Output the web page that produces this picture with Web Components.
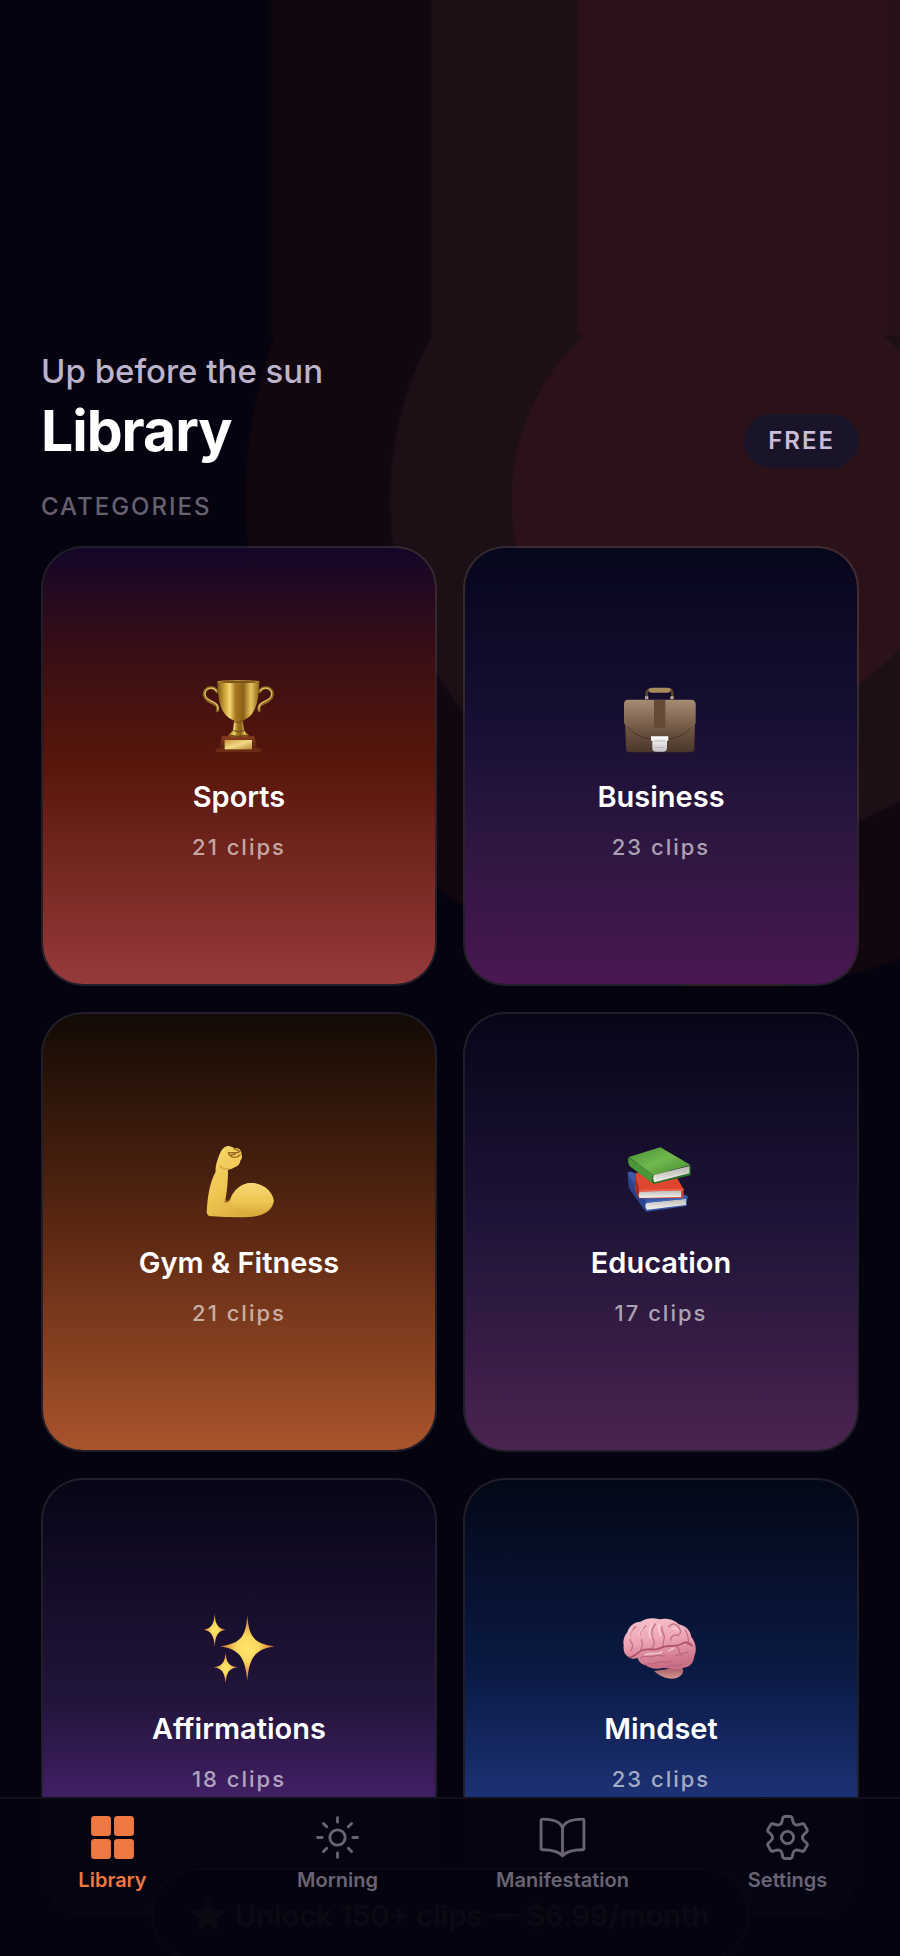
<!DOCTYPE html>
<html lang="en">
<head>
<meta charset="utf-8">
<meta name="viewport" content="width=device-width, initial-scale=1">
<title>Library</title>
<style>
  body {
    margin: 0;
    background: #05030f;
    font-family: Inter, "Liberation Sans", sans-serif;
  }
</style>
</head>
<body>
<library-app>
  <library-header greeting="Up before the sun" plan="FREE">Library</library-header>
  <category-grid label="Categories">
    <category-card icon="trophy" clips="21" colors="#140628, #3a0e14 25%, #58170b 50%, #963a3b">Sports</category-card>
    <category-card icon="briefcase" clips="23" colors="#06061c, #170f32 40%, #2f1742 70%, #4a1752">Business</category-card>
    <category-card icon="arm" clips="21" colors="#130a05, #5c2812 50%, #a9542d">Gym &amp; Fitness</category-card>
    <category-card icon="books" clips="17" colors="#080518, #1d1336 45%, #4a2450">Education</category-card>
    <category-card icon="sparkles" clips="18" colors="#080516, #21143a 50%, #3d1e5f 70%, #5e2c86">Affirmations</category-card>
    <category-card icon="brain" clips="23" colors="#030816, #0b1a45 45%, #1b2f70 70%, #2a48a0">Mindset</category-card>
  </category-grid>
  <upgrade-button slot="floating">Unlock 150+ clips — $6.99/month</upgrade-button>
  <tab-bar slot="tabs">
    <tab-item icon="grid" active>Library</tab-item>
    <tab-item icon="sun">Morning</tab-item>
    <tab-item icon="book">Manifestation</tab-item>
    <tab-item icon="gear">Settings</tab-item>
  </tab-bar>
</library-app>

<script>
const emojis = {
  trophy: `
    <svg viewBox="-3 12 360 330" aria-hidden="true">
      <defs>
        <linearGradient id="cup"><stop stop-color="#7d5a17"/><stop offset=".18" stop-color="#cfa53a"/><stop offset=".3" stop-color="#f0d778"/><stop offset=".43" stop-color="#a87920"/><stop offset=".62" stop-color="#8c6119"/><stop offset=".8" stop-color="#e5c45c"/><stop offset="1" stop-color="#8a6418"/></linearGradient>
        <linearGradient id="plate" x2="1" y2="1"><stop stop-color="#c9973c"/><stop offset=".5" stop-color="#f3da86"/><stop offset="1" stop-color="#b98633"/></linearGradient>
        <linearGradient id="wood" x2="0" y2="1"><stop stop-color="#8b3e20"/><stop offset="1" stop-color="#55200f"/></linearGradient>
      </defs>
      <g fill="none" stroke-linecap="round">
        <path d="M111 92c-6-16-30-16-37 0-5 14 5 26 20 32 14 6 23 11 18 25M239 92c6-16 30-16 37 0 5 14-5 26-20 32-14 6-23 11-18 25" stroke="#8c6820" stroke-width="9"/>
        <path d="M109 90c-7-12-27-12-33 3-4 12 6 22 20 28 14 6 20 12 17 24M241 90c7-12 27-12 33 3 4 12-6 22-20 28-14 6-20 12-17 24" stroke="#dcc067" stroke-width="4"/>
      </g>
      <path d="M126 226h97l8 36H118z" fill="url(#wood)"/>
      <path d="M110 262h130l4 12H106z" fill="#6b2b15"/>
      <path d="M134 237h82v28h-82z" fill="url(#plate)"/>
      <path d="M144 226c0-8 13-10 15-20l4-28h25l4 28c2 10 15 12 15 20z" fill="url(#cup)"/>
      <path d="M112 61h126c-1 42-6 83-27 103-9 9-21 15-36 15s-27-6-36-15c-21-20-26-61-27-103z" fill="url(#cup)"/>
      <ellipse cx="175" cy="62" rx="63" ry="5" fill="#b68b36"/>
      <ellipse cx="175" cy="63" rx="55" ry="3" fill="#765019"/>
      <path d="M157 181q18 7 36 0M154 208q21 8 42 0M146 222q29 8 58 0" fill="none" stroke="#6b4812" stroke-width="3"/>
    </svg>`,
  briefcase: `
    <svg viewBox="3 12 360 330" aria-hidden="true">
      <defs>
        <linearGradient id="case" x2="0" y2="1"><stop stop-color="#8e7560"/><stop offset=".5" stop-color="#705743"/><stop offset="1" stop-color="#49362b"/></linearGradient>
        <linearGradient id="flap" x2="0" y2="1"><stop stop-color="#a68c74"/><stop offset=".35" stop-color="#8d735d"/><stop offset="1" stop-color="#5c4536"/></linearGradient>
        <linearGradient id="clasp" x2="0" y2="1"><stop stop-color="#fff"/><stop offset="1" stop-color="#c5c1c6"/></linearGradient>
      </defs>
      <path d="M140 112V96q1-10 12-10h56q9 0 9 10v16" fill="none" stroke="#57452f" stroke-width="8"/>
      <path d="M145 87q2-7 12-7h46q9 0 10 7-3 8-9 8h-50q-7 0-9-8z" fill="#a8895c"/>
      <path d="M135 106h10v9h-10zM211 106h10v9h-10z" fill="#b9a88e"/>
      <path d="M74 128h212l-3 136q-1 10-12 10H90q-12 0-12-10z" fill="url(#case)"/>
      <path d="M84 116h190q13 0 13 14v56c-8 20-38 45-82 50h-52c-43-5-72-30-81-50v-56q0-14 12-14z" fill="url(#flap)"/>
      <path d="M84 198c15 20 39 34 74 37M202 235c32-3 57-17 72-36" fill="none" stroke="#4b3528" stroke-width="3"/>
      <path d="M162 117h34v84h-34z" fill="#654a38"/>
      <path d="M153 226h52v13h-4v21q0 12-12 12h-21q-11 0-11-12v-21h-4z" fill="url(#clasp)"/>
      <path d="M162 240h34M165 259h28" stroke="#b9b5bb" stroke-width="3"/>
    </svg>`,
  arm: `
    <svg viewBox="-3 0 360 330" aria-hidden="true">
      <defs>
        <linearGradient id="skin" x2=".7" y2="1"><stop stop-color="#f8d86e"/><stop offset=".55" stop-color="#edc450"/><stop offset="1" stop-color="#d8a63a"/></linearGradient>
        <linearGradient id="muscle" x2="0" y2="1"><stop stop-color="#f6d974"/><stop offset=".6" stop-color="#edc550"/><stop offset="1" stop-color="#d8a63a"/></linearGradient>
      </defs>
      <path d="M118 71q8-22 24-26c9-1 14 3 20 6 10-1 17 2 20 8q4 6 2 10c4 8 2 15-3 20 0 9-7 16-17 20-7 5-15 7-20 7 0 30-2 60-8 92 6 6 13 2 17-6 13-26 36-47 61-46 32 2 64 24 67 53-1 28-30 45-65 48-40 4-80 1-120-1-14 0-18-8-15-26 2-34 9-78 26-108-2-15 4-33 11-51z" fill="url(#skin)"/>
      <path d="M150 206c8-25 31-50 64-50 38 0 65 28 67 53-2 20-24 38-59 43-35 3-62-10-72-46z" fill="url(#muscle)"/>
      <path d="M134 212q8 3 16-7M145 65l31 0M145 64q2 13 18 15 12-1 17-7M153 72l13-3M162 53l18 9" fill="none" stroke="#98651f" stroke-width="4" stroke-linecap="round"/>
      <path d="M119 105q10 12 30 8" fill="none" stroke="#d9a840" stroke-width="4"/>
    </svg>`,
  books: `
    <svg viewBox="3 0 360 330" aria-hidden="true">
      <defs>
        <linearGradient id="green" x2="1" y2="1"><stop stop-color="#4a8e37"/><stop offset=".5" stop-color="#70b84d"/><stop offset="1" stop-color="#438833"/></linearGradient>
        <linearGradient id="page" x2="0" y2="1"><stop stop-color="#b9b9b7"/><stop offset="1" stop-color="#f5f3ee"/></linearGradient>
      </defs>
      <path d="M83 129q0-9 12-7l121 53 47 20-3 30-121 17-50-70z" fill="#3958a7"/>
      <path d="M83 129l56 85-2 28-51-72z" fill="#28448e"/>
      <path d="M139 215l119-12v19l-117 14q-9-11-2-21z" fill="url(#page)"/>
      <path d="M137 214l125-13" stroke="#4266b6" stroke-width="4"/>
      <path d="M108 125l111-4 32 54-2 26-132 1-12-27z" fill="#e0462f"/>
      <path d="M105 130l14 50-1 22q-10-6-12-32z" fill="#a42b22"/>
      <path d="M119 182l124-4v20l-124 3q-6-9 0-19z" fill="url(#page)"/>
      <path d="M116 179l134-3" stroke="#ed6048" stroke-width="5"/>
      <path d="M86 78l75 55 111-28v28l-111 26-71-53z" fill="#2d6f28"/>
      <path d="M86 78l95-29 91 53-111 31z" fill="url(#green)"/>
      <path d="M85 80q-3 16 5 26l67 51q-5-15 3-28z" fill="#4a9638"/>
      <path d="M161 133l107-28v22l-105 27q-6-10-2-21z" fill="url(#page)"/>
      <path d="M169 137l94-24M168 144l94-24" stroke="#aaa" stroke-width="1"/>
    </svg>`,
  sparkles: `
    <svg viewBox="-3 3 360 330" aria-hidden="true">
      <defs>
        <radialGradient id="glow"><stop stop-color="#ffe66a"/><stop offset=".4" stop-color="#f9d75f"/><stop offset="1" stop-color="#d06a30"/></radialGradient>
      </defs>
      <g fill="url(#glow)">
        <path d="M202 58c5 62 16 84 82 93-64 10-77 39-82 105-6-66-18-95-82-105 66-9 77-31 82-93z"/>
        <path d="M104 52c2 31 7 45 33 49-26 4-30 19-33 51-3-32-8-47-33-51 26-4 31-18 33-49z"/>
        <path d="M137 171c3 29 8 39 37 43-29 4-34 15-37 48-4-33-9-44-37-48 28-4 33-14 37-43z"/>
      </g>
    </svg>`,
  brain: `
    <svg viewBox="3 3 360 330" aria-hidden="true">
      <defs>
        <linearGradient id="lobe" x2=".2" y2="1"><stop stop-color="#f7c6cf"/><stop offset=".5" stop-color="#eda3b2"/><stop offset="1" stop-color="#c96f86"/></linearGradient>
        <linearGradient id="stem" x2="0" y2="1"><stop stop-color="#9f5962"/><stop offset="1" stop-color="#d79690"/></linearGradient>
      </defs>
      <path d="M162 225l85-12c7 16-2 28-20 34-25 4-46-5-65-22z" fill="url(#stem)"/>
      <path d="M88 184c-13-4-19-19-17-36-3-18 4-31 11-39 5-20 22-31 39-32 19-11 39-13 57-7 24-5 46 2 58 15 22 4 36 20 38 38 14 17 17 41 9 57-2 22-15 35-34 35-18 10-40 2-58 0-20 6-40 4-54-7-14-3-21-12-24-22-10 4-19 3-25-2z" fill="url(#lobe)"/>
      <g fill="none" stroke-linecap="round" stroke-linejoin="round">
        <path d="M108 92c-20 14-26 34-12 50 4 8 0 16-4 22M138 90c-16 10-24 26-14 42 6 12 4 20-2 28M166 84c-14 18-12 34-6 46 6 12 0 22-6 28M186 92c-4 16 12 24 6 38-4 10-2 16-2 22M206 92c12-14 26-8 32 4 8 12 2 22-8 22-10-2-18 4-18 14M256 102c6 12 12 30 8 44" stroke="#c2708a" stroke-width="4"/>
        <path d="M88 184c16 0 24-16 40-22 18-6 36 4 54-6 22-12 44 0 66-14 12-6 22 0 28 8" stroke="#ab4f6c" stroke-width="5"/>
        <path d="M122 186c16-12 26 2 42-6 10-6 18 2 30 0M134 206c16-8 26 2 42-8 14-6 22 6 38-2M228 150c14 8 6 20 18 30M226 180c14-10 28-4 38-12M200 212c16-8 34 4 46-8" stroke="#bd6681" stroke-width="4"/>
        <path d="M96 100c-8 8-12 18-8 28M128 96c-10 10-12 22-6 32M154 88c-8 14-8 26-2 38M178 86c-6 12 0 22 4 34M218 98c6-4 12 0 14 6M136 176c16-8 34 2 50-8M206 164c10-2 12-8 16-8" stroke="#fbdbe0" stroke-width="5" opacity=".65"/>
      </g>
    </svg>`
};

const tabIcons = {
  grid: `
    <svg viewBox="0 0 512 512" fill="currentColor" aria-hidden="true">
      <rect x="32" y="32" width="208" height="208" rx="34"/>
      <rect x="272" y="32" width="208" height="208" rx="34"/>
      <rect x="32" y="272" width="208" height="208" rx="34"/>
      <rect x="272" y="272" width="208" height="208" rx="34"/>
    </svg>`,
  sun: `
    <svg viewBox="0 0 512 512" class="line" aria-hidden="true">
      <path d="M256 48v48M256 416v48M403 109l-34 34M143 369l-34 34M464 256h-48M96 256H48M403 403l-34-34M143 143l-34-34"/>
      <circle cx="256" cy="256" r="80"/>
    </svg>`,
  book: `
    <svg viewBox="0 0 512 512" class="line" aria-hidden="true">
      <path d="M256 160c16-63 76-95 208-96a16 16 0 0 1 16 16v288a16 16 0 0 1-16 16c-128 0-177 26-208 64-30-38-80-64-208-64-10 0-16-8-16-18V80a16 16 0 0 1 16-16c132 1 192 33 208 96zM256 160v288"/>
    </svg>`,
  gear: `
    <svg viewBox="0 0 512 512" class="line" aria-hidden="true">
      <path d="${gearPath()}"/>
      <circle cx="256" cy="256" r="64"/>
    </svg>`
};

// six teeth, each one drawn from foot to tip and back
function gearPath() {
  const points = [];
  for (let tooth = 0; tooth < 360; tooth += 60) {
    [[-25, 158], [-19, 176], [-13, 214], [-9, 222], [9, 222], [13, 214], [19, 176], [25, 158]].forEach(([turn, radius]) => {
      const angle = (tooth + turn) * Math.PI / 180;
      points.push(`${(256 + radius * Math.sin(angle)).toFixed(1)} ${(256 - radius * Math.cos(angle)).toFixed(1)}`);
    });
  }
  return `M${points.join("L")}z`;
}

class LibraryApp extends HTMLElement {
  constructor() {
    super();
    this.shadowDOM = this.attachShadow({ mode: "open" });
    this.shadowDOM.innerHTML = `
      <style>
        :host {
          position: relative;
          display: flex;
          flex-direction: column;
          height: 100vh;
          overflow: hidden;
          --cx: calc(100% - 166px);
          /* sunrise rings, with their light carried straight up above them */
          background:
            linear-gradient(to left, #251117 10px, #2a1218 14px 320px, #1c0f16 326px 466px, #12070f 472px 626px, #05030f 632px) top / 100% 335px no-repeat,
            radial-gradient(circle at var(--cx) 500px, #2a1218 221px, #1c0f16 224px 342px, #12070f 346px 486px, #05030f 490px);
        }
        main {
          box-sizing: border-box;
          flex: 1;
          min-height: 0;
          overflow-y: auto;
          scrollbar-width: none;
          padding: 351px 41px 180px;
        }
      </style>
      <main><slot></slot></main>
      <slot name="floating"></slot>
      <slot name="tabs"></slot>
    `;
  }
}

class LibraryHeader extends HTMLElement {
  connectedCallback() {
    this.shadowDOM = this.attachShadow({ mode: "open" });
    this.shadowDOM.innerHTML = `
      <style>
        :host {
          display: flex;
          align-items: flex-end;
          justify-content: space-between;
        }
        p, h1 {
          margin: 0;
        }
        p {
          color: #bdb3cb;
          font-size: 33px;
          line-height: 40px;
          font-weight: 500;
        }
        h1 {
          color: #fff;
          font-size: 57px;
          line-height: 80px;
          font-weight: 700;
          letter-spacing: -1px;
        }
        .plan {
          margin-bottom: 3px;
          padding: 0 24px;
          border-radius: 27px;
          background: #191427;
          color: #c8bcd8;
          font-size: 24px;
          line-height: 54px;
          font-weight: 600;
          letter-spacing: 2px;
        }
      </style>
      <div>
        <p>${this.getAttribute("greeting")}</p>
        <h1><slot></slot></h1>
      </div>
      <span class="plan">${this.getAttribute("plan")}</span>
    `;
  }
}

class CategoryGrid extends HTMLElement {
  connectedCallback() {
    this.shadowDOM = this.attachShadow({ mode: "open" });
    this.shadowDOM.innerHTML = `
      <style>
        :host {
          display: block;
        }
        h2 {
          margin: 20px 0 23px;
          color: #67606f;
          font-size: 24px;
          line-height: 32px;
          font-weight: 500;
          letter-spacing: 2px;
          text-transform: uppercase;
        }
        .grid {
          display: grid;
          grid-template-columns: 1fr 1fr;
          gap: 26px;
        }
      </style>
      <h2>${this.getAttribute("label")}</h2>
      <div class="grid"><slot></slot></div>
    `;
  }
}

class CategoryCard extends HTMLElement {
  connectedCallback() {
    this.shadowDOM = this.attachShadow({ mode: "open" });
    this.render();
  }

  render() {
    this.shadowDOM.innerHTML = `
      <style>
        :host {
          display: block;
        }
        a {
          box-sizing: border-box;
          display: flex;
          flex-direction: column;
          align-items: center;
          justify-content: center;
          min-height: 440px;
          padding-bottom: 4px;
          border: 2px solid #ffffff1c;
          border-radius: 42px;
          background: linear-gradient(${this.getAttribute("colors")}) padding-box;
          text-decoration: none;
        }
        svg {
          width: 120px;
          height: 110px;
        }
        h3, p {
          margin: 0;
        }
        h3 {
          margin-top: 4px;
          color: #fff;
          font-size: 29px;
          line-height: 36px;
          font-weight: 600;
        }
        p {
          margin-top: 16px;
          color: #ffffff9c;
          font-size: 22px;
          line-height: 32px;
          font-weight: 500;
          letter-spacing: 2px;
        }
      </style>
      <a href="#${this.getAttribute("icon")}">
        ${emojis[this.getAttribute("icon")]}
        <h3><slot></slot></h3>
        <p>${this.getAttribute("clips")} clips</p>
      </a>
    `;
  }
}

class UpgradeButton extends HTMLElement {
  constructor() {
    super();
    this.shadowDOM = this.attachShadow({ mode: "open" });
    this.shadowDOM.innerHTML = `
      <style>
        /* floats above the list and slides under the tab bar */
        :host {
          position: absolute;
          inset: auto 0 -6px;
          display: flex;
          justify-content: center;
        }
        button {
          display: flex;
          align-items: center;
          gap: 10px;
          height: 94px;
          padding: 0 38px;
          border: 2px solid #8c8450;
          border-radius: 47px;
          background: #05030f;
          color: #e0d8a0;
          font-family: inherit;
          font-size: 29px;
          font-weight: 600;
          white-space: nowrap;
        }
        svg {
          width: 34px;
          height: 34px;
        }
      </style>
      <button type="button">
        <svg viewBox="0 0 34 34" fill="currentColor" aria-hidden="true"><path d="M17 1l5 11 12 1-9 8 3 12-11-6-11 6 3-12-9-8 12-1z"/></svg>
        <slot></slot>
      </button>
    `;
  }
}

class TabBar extends HTMLElement {
  constructor() {
    super();
    this.shadowDOM = this.attachShadow({ mode: "open" });
    this.shadowDOM.innerHTML = `
      <style>
        :host {
          position: absolute;
          inset: auto 0 0;
        }
        nav {
          box-sizing: border-box;
          display: grid;
          grid-template-columns: repeat(4, 1fr);
          padding: 14px 0 64px;
          border-top: 2px solid #13101b;
          background: #05030ff8;
        }
      </style>
      <nav><slot></slot></nav>
    `;
  }
}

class TabItem extends HTMLElement {
  connectedCallback() {
    this.shadowDOM = this.attachShadow({ mode: "open" });
    this.shadowDOM.innerHTML = `
      <style>
        :host {
          display: block;
          color: #696373;
        }
        :host([active]) {
          color: #ee7842;
        }
        a {
          display: flex;
          flex-direction: column;
          align-items: center;
          gap: 6px;
          color: inherit;
          font-size: 20px;
          line-height: 24px;
          font-weight: 600;
          text-decoration: none;
        }
        svg {
          width: 49px;
          height: 49px;
        }
        .line {
          fill: none;
          stroke: currentColor;
          stroke-width: 30;
          stroke-linecap: round;
          stroke-linejoin: round;
        }
      </style>
      <a href="#">
        ${tabIcons[this.getAttribute("icon")]}
        <slot></slot>
      </a>
    `;
  }
}

customElements.define("library-app", LibraryApp);
customElements.define("library-header", LibraryHeader);
customElements.define("category-grid", CategoryGrid);
customElements.define("category-card", CategoryCard);
customElements.define("upgrade-button", UpgradeButton);
customElements.define("tab-bar", TabBar);
customElements.define("tab-item", TabItem);
</script>
</body>
</html>
